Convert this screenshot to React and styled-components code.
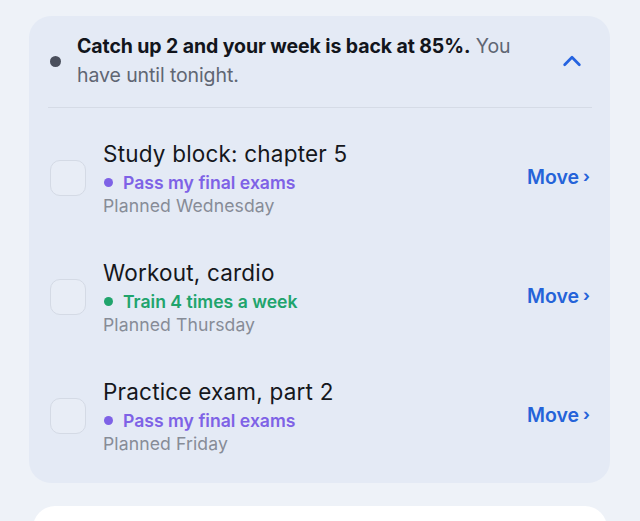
import React from "react";
import styled, { createGlobalStyle } from "styled-components";

const Global = createGlobalStyle`
  html, body { margin: 0; padding: 0; background: #eef2f8; }
  body { font-family: Inter, "Liberation Sans", Arial, sans-serif; -webkit-font-smoothing: antialiased; }
`;

const Page = styled.div`
  padding: 16px 30px 0 29px;
  height: 521px;
  box-sizing: border-box;
  overflow: hidden;
`;

const Card = styled.section`
  background: #e4eaf5;
  border-radius: 22px;
  padding: 0 18px 7px 19px;
`;

const Header = styled.div`
  display: flex;
  align-items: center;
  padding: 16px 9px 17px 2px;
  border-bottom: 1.5px solid #d5dbe6;
`;

const Dot = styled.span`
  width: 11px;
  height: 11px;
  border-radius: 50%;
  background: #4a4f5c;
  flex: none;
`;

const HeaderText = styled.p`
  margin: 0 0 0 16px;
  flex: 1;
  font-size: 19.5px;
  line-height: 29px;
  color: #5f6673;
  letter-spacing: -0.1px;
  b { color: #12151c; font-weight: 700; }
`;

const Toggle = styled.button`
  border: 0;
  background: none;
  padding: 0;
  margin-left: 20px;
  display: flex;
  color: #2563e0;
`;

const List = styled.div`
  padding-top: 11px;
`;

const Row = styled.div`
  display: flex;
  align-items: center;
  height: 119px;
  padding-left: 2px;
`;

const Check = styled.span`
  width: 34px;
  height: 34px;
  border: 1.5px solid #d4dae5;
  border-radius: 10px;
  background: #e8edf6;
  flex: none;
  margin-top: -1px;
`;

const Body = styled.div`
  flex: 1;
  margin-left: 17px;
  display: flex;
  flex-direction: column;
`;

const Title = styled.div`
  font-size: 22.5px;
  line-height: 28px;
  color: #15171c;
  letter-spacing: 0.2px;
`;

const Goal = styled.div`
  display: flex;
  align-items: center;
  gap: 10px;
  font-size: 17.6px;
  line-height: 23px;
  font-weight: 600;
  color: ${(p) => p.$color};
  margin-top: 3px;
`;

const SmallDot = styled.span`
  width: 9px;
  height: 9px;
  border-radius: 50%;
  background: ${(p) => p.$color};
  margin-left: 1px;
`;

const Planned = styled.div`
  font-size: 17.6px;
  line-height: 23px;
  color: #878c97;
  letter-spacing: 0.1px;
`;

const Move = styled.button`
  border: 0;
  background: none;
  padding: 0 2px 0 0;
  margin-top: -3px;
  display: flex;
  align-items: center;
  gap: 4px;
  font-family: inherit;
  font-size: 19.5px;
  font-weight: 600;
  color: #2563d9;
  span { font-size: 16px; font-weight: 700; margin-top: -2px; }
`;

const NextCard = styled.div`
  margin: 23px 3px 0 4px;
  height: 60px;
  background: #ffffff;
  border-radius: 22px 22px 0 0;
`;

const tasks = [
  { title: "Study block: chapter 5", goal: "Pass my final exams", color: "#7e62e6", day: "Wednesday" },
  { title: "Workout, cardio", goal: "Train 4 times a week", color: "#20a46c", day: "Thursday" },
  { title: "Practice exam, part 2", goal: "Pass my final exams", color: "#7e62e6", day: "Friday" },
];

export default function App() {
  return (
    <Page>
      <Global />
      <Card>
        <Header>
          <Dot />
          <HeaderText>
            <b>Catch up 2 and your week is back at 85%.</b> You have until tonight.
          </HeaderText>
          <Toggle aria-label="Collapse">
            <svg width="22" height="22" viewBox="0 0 24 24" fill="none" stroke="currentColor" strokeWidth="3" strokeLinecap="round" strokeLinejoin="round">
              <path d="M4 16l8-8 8 8" />
            </svg>
          </Toggle>
        </Header>
        <List>
          {tasks.map((t) => (
            <Row key={t.title}>
              <Check />
              <Body>
                <Title>{t.title}</Title>
                <Goal $color={t.color}>
                  <SmallDot $color={t.color} />
                  {t.goal}
                </Goal>
                <Planned>Planned {t.day}</Planned>
              </Body>
              <Move>
                Move<span>›</span>
              </Move>
            </Row>
          ))}
        </List>
      </Card>
      <NextCard />
    </Page>
  );
}
